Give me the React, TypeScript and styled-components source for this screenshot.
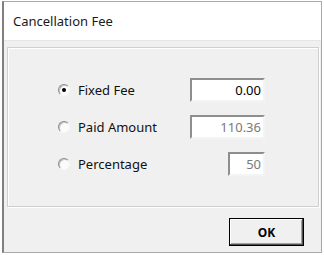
import React, { useState } from 'react';
import styled, { createGlobalStyle } from 'styled-components';

const GlobalStyle = createGlobalStyle`
  html, body {
    margin: 0;
    padding: 0;
    background: #ffffff;
  }
  body {
    font-family: "Noto Sans", "Liberation Sans", sans-serif;
    font-size: 13px;
    color: #000;
  }
`;

const Window = styled.div`
  box-sizing: border-box;
  width: 320px;
  height: 252px;
  margin: 1px 0 0 2px;
  border: 1px solid #a8a8a8;
  border-left: 2px solid #808080;
  display: flex;
  flex-direction: column;
  background: #f0f0f0;
`;

const TitleBar = styled.div`
  height: 38px;
  background: #ffffff;
  border-bottom: 1px solid #e6e6e6;
  padding-left: 9px;
  display: flex;
  align-items: center;
  font-size: 13px;
  color: #1a1a1a;
`;

const Body = styled.div`
  flex: 1;
  display: flex;
  flex-direction: column;
  padding: 6px 2px 0 3px;
`;

const GroupBox = styled.div`
  box-sizing: border-box;
  height: 160px;
  border: 1px solid #cfcfcf;
  box-shadow: inset 1px 1px 0 #ffffff, 1px 1px 0 #ffffff;
  padding: 30px 53px 0 50px;
  display: grid;
  grid-template-columns: 1fr 75px;
  grid-auto-rows: 24px;
  row-gap: 13px;
  align-items: center;
`;

const Option = styled.label`
  display: flex;
  align-items: center;
  gap: 8px;
  cursor: default;
  color: #111;
`;

const Radio = styled.span<{ checked?: boolean }>`
  box-sizing: border-box;
  width: 12px;
  height: 12px;
  border-radius: 50%;
  border: 1px solid;
  border-color: #8c8c8c #f6f6f6 #f6f6f6 #8c8c8c;
  box-shadow: inset 1px 1px 0 #c4c4c4;
  background: #fbfbfb;
  display: flex;
  align-items: center;
  justify-content: center;

  &::after {
    content: '';
    width: 4px;
    height: 4px;
    border-radius: 50%;
    background: ${p => (p.checked ? '#000' : 'transparent')};
  }
`;

const Field = styled.input<{ narrow?: boolean }>`
  box-sizing: border-box;
  justify-self: end;
  width: ${p => (p.narrow ? '37px' : '75px')};
  height: 24px;
  border: 2px solid;
  border-color: #8e8e8e #f4f4f4 #f4f4f4 #8e8e8e;
  background: #ffffff;
  font-family: inherit;
  font-size: 13px;
  text-align: right;
  padding: 0 2px 0 0;
  color: #000;
  outline: none;

  &:disabled {
    color: #7a7a7a;
    background: #ffffff;
  }
`;

const Footer = styled.div`
  flex: 1;
  display: flex;
  justify-content: flex-end;
  align-items: flex-start;
  padding: 11px 15px 0 0;
`;

const Button = styled.button`
  box-sizing: border-box;
  width: 75px;
  height: 28px;
  background: #f0f0f0;
  border: 1px solid #000;
  box-shadow: inset -1px -1px 0 #505050, inset 1px 1px 0 #ffffff, inset -2px -2px 0 #a0a0a0;
  font-family: inherit;
  font-size: 12px;
  font-weight: bold;
  color: #000;
  cursor: pointer;
`;

const App = () => {
  const [mode, setMode] = useState('fixed');

  return (
    <>
      <GlobalStyle />
      <Window>
        <TitleBar>Cancellation Fee</TitleBar>
        <Body>
          <GroupBox>
            <Option onClick={() => setMode('fixed')}>
              <Radio checked={mode === 'fixed'} />
              Fixed Fee
            </Option>
            <Field defaultValue="0.00" disabled={mode !== 'fixed'} />

            <Option onClick={() => setMode('paid')}>
              <Radio checked={mode === 'paid'} />
              Paid Amount
            </Option>
            <Field defaultValue="110.36" disabled={mode !== 'paid'} />

            <Option onClick={() => setMode('percent')}>
              <Radio checked={mode === 'percent'} />
              Percentage
            </Option>
            <Field narrow defaultValue="50" disabled={mode !== 'percent'} />
          </GroupBox>
          <Footer>
            <Button>OK</Button>
          </Footer>
        </Body>
      </Window>
    </>
  );
};

export default App;
